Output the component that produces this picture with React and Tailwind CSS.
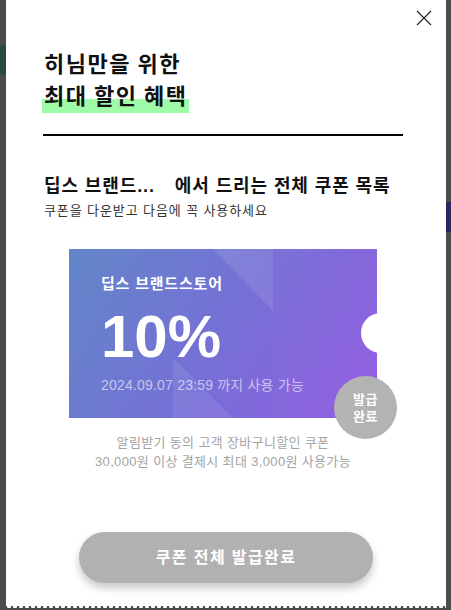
import React from "react";

export default function App() {
  return (
    <div
      className="w-[451px] h-[610px] flex bg-[#4b4b4b] overflow-hidden"
      style={{ fontFamily: '"Liberation Sans", "Noto Sans CJK KR", sans-serif' }}
    >
      {/* left backdrop strip */}
      <div className="w-[6px] h-full flex flex-col shrink-0">
        <div className="h-[45px]" />
        <div className="h-[30px] bg-[#2b4a3e]" />
        <div className="flex-1" />
      </div>

      {/* modal */}
      <div className="relative w-[440px] h-full bg-white shrink-0 flex flex-col">
        <button className="absolute top-[10px] right-[14px] w-[16px] h-[16px]">
          <svg width="16" height="16" viewBox="0 0 16 16">
            <path d="M1 1L15 15M15 1L1 15" stroke="#222" strokeWidth="1.1" fill="none" />
          </svg>
        </button>

        <div className="pl-[38px] pt-[46px]">
          <h2
            className="text-[22px] leading-[32px] font-bold text-[#111] tracking-[1.5px]"
            style={{ fontFamily: '"Noto Sans CJK KR", sans-serif' }}
          >
            히님만을 위한
            <br />
            <span className="bg-[linear-gradient(transparent_59%,#9ffba7_59%)] px-[2px] pb-[3px] ml-[-2px]">
              최대 할인 혜택
            </span>
          </h2>
          <div className="mt-[24px] ml-[-1px] w-[360px] h-[2px] bg-black" />

          <p className="mt-[37px] text-[18px] leading-[26px] font-bold text-[#111] whitespace-nowrap tracking-[0.9px]">
            딥스 브랜드...<span className="inline-block w-[14px]" /> 에서 드리는 전체 쿠폰 목록
          </p>
          <p className="mt-[2px] text-[13px] leading-[19px] text-[#333] tracking-[0.9px]">
            쿠폰을 다운받고 다음에 꼭 사용하세요
          </p>

          {/* coupon */}
          <div className="mt-[29px] ml-[25px] w-[308px]">
            <div className="relative w-[308px] h-[169px]">
              <div className="absolute inset-0 bg-[linear-gradient(120deg,#6386c8_0%,#7670d6_50%,#925ae3_100%)]" />
              <svg className="absolute inset-0" width="308" height="169" viewBox="0 0 308 169">
                <polygon points="144,0 204,0 204,62" fill="#ffffff" fillOpacity="0.1" />
                <polygon points="204,0 308,0 308,169 204,169" fill="#ffffff" fillOpacity="0.02" />
                <polygon points="104,109 104,169 164,169" fill="#ffffff" fillOpacity="0.08" />
              </svg>
              <div className="absolute left-[292px] top-[64px] w-[40px] h-[40px] rounded-full bg-white" />

              <div className="relative pl-[32px] pt-[24px] text-white">
                <div className="text-[15px] leading-[22px] font-bold tracking-[0.8px]">딥스 브랜드스토어</div>
                <div className="mt-[12px] text-[60px] leading-[60px] font-bold">10%</div>
                <div className="mt-[8px] text-[14px] leading-[20px] text-white/60 tracking-[0.2px]">
                  2024.09.07 23:59 까지 사용 가능
                </div>
              </div>

              <div className="absolute left-[265px] top-[127px] w-[63px] h-[63px] rounded-full bg-[#b3b3b3] flex items-center justify-center text-center text-white text-[13px] leading-[17px] font-bold tracking-[0.5px]">
                발급
                <br />
                완료
              </div>
            </div>

            <p className="mt-[15px] text-center text-[13px] leading-[19px] text-[#a3a3a3] tracking-[0.35px]">
              알림받기 동의 고객 장바구니할인 쿠폰
              <br />
              30,000원 이상 결제시 최대 3,000원 사용가능
            </p>
          </div>
        </div>

        <div className="mt-[61px] pl-[73px]">
          <button className="w-[294px] h-[51px] rounded-full bg-[#b1b1b1] text-white text-[16px] font-bold tracking-[1.4px] shadow-[0_5px_8px_rgba(0,0,0,0.22)]">
            쿠폰 전체 발급완료
          </button>
        </div>

        <div className="absolute left-0 right-0 bottom-0 h-[4px] bg-[#4b4b4b] bg-[radial-gradient(circle_at_3px_0,#ffffff_2px,transparent_2.5px)] bg-[length:6px_4px]" />
      </div>

      {/* right backdrop strip */}
      <div className="w-[5px] h-full flex flex-col shrink-0">
        <div className="h-[202px]" />
        <div className="h-[30px] bg-[#2a2660]" />
        <div className="flex-1" />
      </div>
    </div>
  );
}
